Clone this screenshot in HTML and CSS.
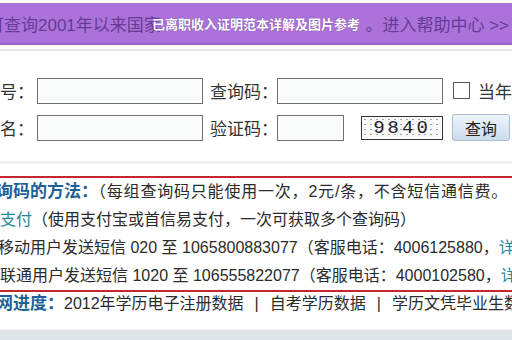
FILE: index.html
```html
<!DOCTYPE html>
<html lang="zh-CN">
<head>
  <meta charset="UTF-8">
  <title>已离职收入证明范本详解及图片参考</title>
  <link rel="stylesheet" href="styles.css">
</head>
<body>
  <div class="banner">
    <span class="banner-text banner-left">可查询2001年以来国家</span>
    <span class="banner-text banner-right">。进入帮助中心 &gt;&gt;</span>
    <h1 class="banner-title">已离职收入证明范本详解及图片参考</h1>
  </div>
  <div class="rule"></div>

  <div class="form">
    <div class="form-row">
      <label class="label label-first">编号：</label>
      <input class="field field-wide" type="text">
      <label class="label label-second">查询码：</label>
      <input class="field field-wide" type="text">
      <input class="check" type="checkbox" id="dangnian">
      <label class="label check-label" for="dangnian">当年毕业生</label>
    </div>
    <div class="form-row">
      <label class="label label-first">姓名：</label>
      <input class="field field-wide" type="text">
      <label class="label label-second">验证码：</label>
      <input class="field field-short" type="text">
      <div class="captcha">9840</div>
      <button class="btn">查询</button>
    </div>
  </div>
  <div class="rule rule-light"></div>

  <div class="methods">
    <p class="line line-head"><b class="head">询码的方法：</b><span class="wide">（每组查询码只能使用一次，2元/条，不含短信通信费。</span></p>
    <p class="line"><span class="link">支付</span>（使用支付宝或首信易支付，一次可获取多个查询码）</p>
    <p class="line line-move">移动用户发送短信 020 至 1065800883077（客服电话：4006125880，<span class="link">详</span></p>
    <p class="line">联通用户发送短信 1020 至 106555822077（客服电话：4000102580，<span class="link">详</span></p>
  </div>

  <p class="progress"><b class="head">网进度：</b>2012年学历电子注册数据<span class="sep">|</span>自考学历数据<span class="sep">|</span>学历文凭毕业生数据</p>

  <div class="footer-strip"></div>
</body>
</html>
```

FILE: styles.css
```css
body {
  margin: 0;
  padding-top: 3px;
  width: 512px;
  height: 337px;
  overflow: hidden;
  background-color: white;
  font-family: "Liberation Sans", "Noto Sans CJK SC", sans-serif;
  color: #2b2b2b;
}

/* banda morada de arriba */
.banner {
  position: relative;
  height: 40px;
  background-color: #ab73d9;
  border-bottom: 2px solid #9862c6;
  display: flex;
  justify-content: space-between;
  align-items: center;
  white-space: nowrap;
  overflow: hidden;
}

.banner-text {
  font-size: 17px;
  color: #673a98;
  flex: none;
}

.banner-left {
  margin-left: -13px;
}

.banner-right {
  margin-right: 3px;
}

.banner-title {
  position: absolute;
  top: 2px;
  left: 0;
  right: 0;
  margin: 0;
  line-height: 40px;
  text-align: center;
  font-size: 13px;
  font-weight: bold;
  color: white;
  text-shadow: 0 0 1px rgba(70, 20, 110, 0.7);
}

.rule {
  margin-top: 4px;
  height: 2px;
  background-color: #e6e6ea;
}

.rule-light {
  margin-top: 20px;
  height: 3px;
  background-color: #eeeef3;
}

.form {
  padding-top: 26px;
}

.form-row {
  display: flex;
  align-items: center;
  height: 27px;
  margin-bottom: 10px;
  white-space: nowrap;
}

.form-row > * {
  flex: none;
}

.form-row:last-child {
  margin-bottom: 0;
}

.label {
  font-size: 17px;
  color: #333;
}

.label-first {
  margin-left: -17px;
  width: 54px;
}

.label-second {
  margin-left: 7px;
  width: 67px;
}

.field {
  box-sizing: border-box;
  height: 26px;
  padding: 0 4px;
  border: 1px solid #6f7070;
  background-color: #fbfdfd;
  outline: none;
}

.field-wide {
  width: 166px;
}

.field-short {
  width: 67px;
}

.check {
  -webkit-appearance: none;
  appearance: none;
  box-sizing: border-box;
  width: 17px;
  height: 17px;
  margin: 0 0 0 10px;
  border: 1px solid #555;
  background-color: white;
}

.check-label {
  margin-left: 8px;
}

.captcha {
  box-sizing: border-box;
  width: 82px;
  height: 24px;
  margin-left: 17px;
  border: 1px solid #333;
  background-color: #fafafa;
  background-image: radial-gradient(circle, #a0a0a0 0.6px, transparent 1px);
  background-size: 6px 5px;
  font-family: "Liberation Mono", monospace;
  font-size: 19px;
  line-height: 22px;
  letter-spacing: 3px;
  text-align: center;
  color: #1d2530;
}

.btn {
  box-sizing: border-box;
  width: 58px;
  height: 27px;
  margin-left: 9px;
  padding: 0;
  border: 1px solid #a8bccf;
  border-radius: 3px;
  background: linear-gradient(#eef4fb, #cadcef);
  font-family: "Liberation Sans", "Noto Sans CJK SC", sans-serif;
  font-size: 16px;
  color: #222;
}

/* recuadro rojo con los métodos */
.methods {
  margin-top: 12px;
  border-top: 2px solid #c4282e;
  border-bottom: 2px solid #c4282e;
}

.line {
  margin: 0;
  height: 28px;
  line-height: 28px;
  font-size: 16px;
  white-space: nowrap;
  color: #2b2b2b;
}

.line-head {
  margin-left: -4px;
}

.wide {
  letter-spacing: 0.8px;
}

.line-move {
  margin-left: -2px;
}

.head {
  font-size: 17px;
  color: #1f5f95;
}

.link {
  color: #23879a;
}

.progress {
  margin: 0 0 0 -4px;
  line-height: 24px;
  font-size: 16px;
  white-space: nowrap;
  color: #2b2b2b;
}

.sep {
  margin: 0 11px;
}

.footer-strip {
  margin-top: 13px;
  height: 12px;
  border-top: 1px solid #eef2f4;
  background-color: #dde5e9;
}
```
